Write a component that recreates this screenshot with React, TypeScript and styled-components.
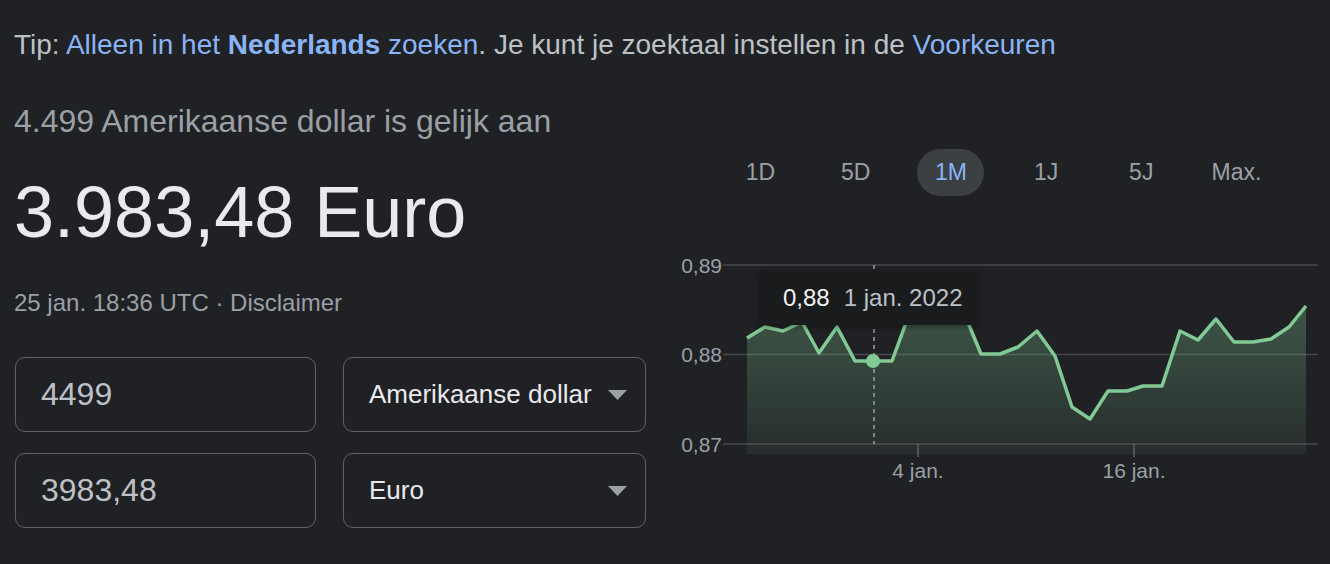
import styled, { createGlobalStyle } from "styled-components"

type Point = [number, number]

const ranges = ["1D", "5D", "1M", "1J", "5J", "Max."]

// koers over januari, in svg-coordinaten van de grafiek
const points: Point[] = [
    [67, 88], [85, 77], [103, 81], [122, 72], [139, 103], [157, 77], [175, 111], [193, 111],
    [212, 111], [230, 62], [248, 53], [266, 57], [284, 63], [301, 104], [320, 104], [338, 97],
    [357, 81], [375, 106], [392, 157], [410, 169], [428, 141], [447, 141], [463, 136], [482, 136],
    [500, 81], [518, 90], [536, 69], [554, 92], [573, 92], [591, 89], [609, 77], [626, 56],
]

const gridLines = [
    { label: "0,89", y: 15 },
    { label: "0,88", y: 104.5 },
    { label: "0,87", y: 194 },
]

const xTicks = [
    { label: "4 jan.", x: 238 },
    { label: "16 jan.", x: 454 },
]

export default function App() {
    const line = points.map(p => p.join(",")).join(" ")
    const area = `67,204 ${line} 626,204`

    return (
        <>
            <GlobalStyle />
            <Page>
                <Tip>
                    Tip: <Link>Alleen in het <b>Nederlands</b> zoeken</Link>. Je kunt je zoektaal instellen in de <Link>Voorkeuren</Link>
                </Tip>
                <Main>
                    <Left>
                        <Question>4.499 Amerikaanse dollar is gelijk aan</Question>
                        <Result>3.983,48 Euro</Result>
                        <Meta>25 jan. 18:36 UTC · Disclaimer</Meta>
                        <Form>
                            <Amount value="4499" readOnly />
                            <Select>
                                <span>Amerikaanse dollar</span>
                                <Caret />
                            </Select>
                            <Amount value="3983,48" readOnly />
                            <Select>
                                <span>Euro</span>
                                <Caret />
                            </Select>
                        </Form>
                    </Left>
                    <Right>
                        <Tabs>
                            {ranges.map(r => (
                                <Tab key={r} $active={r === "1M"}>{r}</Tab>
                            ))}
                        </Tabs>
                        <ChartWrap>
                            <svg width="638" height="240" viewBox="0 0 638 240">
                                <defs>
                                    <linearGradient id="fill" x1="0" y1="0" x2="0" y2="1">
                                        <stop offset="0" stopColor="#81c995" stopOpacity="0.32" />
                                        <stop offset="1" stopColor="#81c995" stopOpacity="0.07" />
                                    </linearGradient>
                                </defs>
                                {gridLines.map(g => (
                                    <g key={g.label}>
                                        <line x1="43" x2="638" y1={g.y} y2={g.y} stroke="#44474b" strokeWidth="1.5" />
                                        <text x="42" y={g.y + 7.5} textAnchor="end" fill="#9aa0a6" fontSize="21" fontFamily="Liberation Sans, Arial, sans-serif">{g.label}</text>
                                    </g>
                                ))}
                                <polygon points={area} fill="url(#fill)" />
                                <polyline points={line} fill="none" stroke="#81c995" strokeWidth="3.5" strokeLinejoin="round" />
                                <line x1="194" x2="194" y1="15" y2="194" stroke="#9aa0a6" strokeWidth="1.5" strokeDasharray="4 4" />
                                <circle cx="193" cy="111" r="7" fill="#81c995" />
                                {xTicks.map(t => (
                                    <g key={t.label}>
                                        <line x1={t.x} x2={t.x} y1="194" y2="207" stroke="#5f6368" strokeWidth="1.5" />
                                        <text x={t.x} y="228" textAnchor="middle" fill="#9aa0a6" fontSize="21" fontFamily="Liberation Sans, Arial, sans-serif">{t.label}</text>
                                    </g>
                                ))}
                            </svg>
                            <Tooltip>
                                <strong>0,88</strong>
                                <span>1 jan. 2022</span>
                            </Tooltip>
                        </ChartWrap>
                    </Right>
                </Main>
            </Page>
        </>
    )
}

function Caret() {
    return (
        <svg width="19" height="10" viewBox="0 0 19 10">
            <path d="M0 0 L19 0 L9.5 10 Z" fill="#9aa0a6" />
        </svg>
    )
}

const GlobalStyle = createGlobalStyle`
    * {
        box-sizing: border-box;
    }
    body {
        margin: 0;
        background: #202124;
        font-family: "Liberation Sans", Arial, sans-serif;
    }
`

const Page = styled.div`
    width: 1330px;
    height: 564px;
    padding-left: 14px;
    padding-top: 27px;
    overflow: hidden;
`

const Tip = styled.div`
    font-size: 28px;
    line-height: 36px;
    color: #bdc1c6;
    white-space: nowrap;
`

const Link = styled.span`
    color: #8ab4f8;

    b {
        font-weight: bold;
    }
`

const Main = styled.div`
    display: flex;
    align-items: flex-start;
    gap: 33px;
`

const Left = styled.div`
    width: 633px;
    display: flex;
    flex-direction: column;
`

const Question = styled.div`
    margin-top: 38px;
    font-size: 32px;
    line-height: 40px;
    color: #9aa0a6;
`

const Result = styled.div`
    margin-top: 31px;
    font-size: 72px;
    line-height: 80px;
    color: #e8eaed;
`

const Meta = styled.div`
    margin-top: 35px;
    font-size: 24px;
    line-height: 32px;
    color: #9aa0a6;
`

const Form = styled.div`
    margin-top: 38px;
    margin-left: 1px;
    display: grid;
    grid-template-columns: 301px 303px;
    grid-auto-rows: 75px;
    column-gap: 27px;
    row-gap: 21px;
`

const Amount = styled.input`
    width: 100%;
    height: 100%;
    background: transparent;
    border: 1.5px solid #5f6368;
    border-radius: 10px;
    padding: 0 0 0 25px;
    font-family: inherit;
    font-size: 32px;
    color: #bdc1c6;
    outline: none;
`

const Select = styled.div`
    display: flex;
    align-items: center;
    justify-content: space-between;
    border: 1.5px solid #5f6368;
    border-radius: 10px;
    padding: 0 18px 0 25px;
    font-size: 26px;
    color: #e8eaed;
`

const Right = styled.div`
    width: 638px;
    display: flex;
    flex-direction: column;
`

const Tabs = styled.div`
    margin-top: 86px;
    margin-left: 47px;
    display: flex;
    gap: 28.2px;
`

const Tab = styled.div<{ $active?: boolean }>`
    width: 67px;
    height: 47px;
    border-radius: 24px;
    display: flex;
    align-items: center;
    justify-content: center;
    font-size: 23px;
    color: ${props => props.$active ? "#8ab4f8" : "#9aa0a6"};
    background: ${props => props.$active ? "#3c4043" : "transparent"};
`

const ChartWrap = styled.div`
    position: relative;
    margin-top: 54px;
    height: 240px;

    svg {
        display: block;
    }
`

const Tooltip = styled.div`
    position: absolute;
    left: 80px;
    top: 21px;
    width: 217px;
    height: 54px;
    display: flex;
    align-items: center;
    gap: 14px;
    padding-left: 23px;
    background: #1a1b1d;
    box-shadow: 0 2px 6px rgba(0, 0, 0, 0.35);
    font-size: 24px;

    strong {
        font-weight: normal;
        color: #f1f3f4;
    }

    span {
        color: #bdc1c6;
    }
`
